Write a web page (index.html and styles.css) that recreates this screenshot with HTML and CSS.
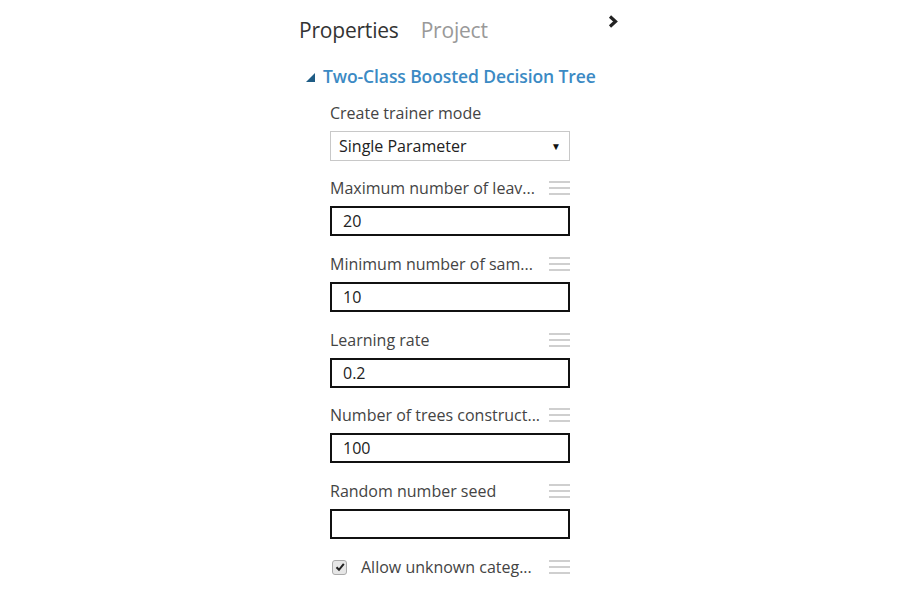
FILE: index.html
```html
<!DOCTYPE html>
<html>
<head>
<meta charset="utf-8">
<link rel="stylesheet" href="styles.css">
</head>
<body>
<div class="panel">
  <div class="tabs">
    <span class="tab active">Properties</span>
    <span class="tab">Project</span>
    <svg class="chev" width="10" height="13" viewBox="0 0 10 13"><path d="M2 1.5 L7.5 6.5 L2 11.5" fill="none" stroke="#222" stroke-width="3.2"/></svg>
  </div>
  <div class="section-title">
    <svg class="tri" width="9" height="9" viewBox="0 0 9 9"><polygon points="9,0 9,9 0,9" fill="#1f5c85"/></svg>
    <span>Two-Class Boosted Decision Tree</span>
  </div>
  <div class="fields">
    <div class="field select-field">
      <div class="label-row"><span class="label">Create trainer mode</span></div>
      <div class="select"><span>Single Parameter</span><span class="arrow">▼</span></div>
    </div>
    <div class="field">
      <div class="label-row"><span class="label">Maximum number of leav...</span><span class="menu"><i></i><i></i><i></i></span></div>
      <div class="input">20</div>
    </div>
    <div class="field">
      <div class="label-row"><span class="label">Minimum number of sam...</span><span class="menu"><i></i><i></i><i></i></span></div>
      <div class="input">10</div>
    </div>
    <div class="field tight">
      <div class="label-row"><span class="label">Learning rate</span><span class="menu"><i></i><i></i><i></i></span></div>
      <div class="input">0.2</div>
    </div>
    <div class="field">
      <div class="label-row"><span class="label">Number of trees construct...</span><span class="menu"><i></i><i></i><i></i></span></div>
      <div class="input">100</div>
    </div>
    <div class="field">
      <div class="label-row"><span class="label">Random number seed</span><span class="menu"><i></i><i></i><i></i></span></div>
      <div class="input"></div>
    </div>
    <div class="check-row">
      <span class="checkbox"><svg width="10" height="10" viewBox="0 0 10 10"><path d="M1.5 5.2 L4 7.8 L8.8 1.8" fill="none" stroke="#222" stroke-width="2"/></svg></span>
      <span class="label check-label">Allow unknown categ...</span>
      <span class="menu"><i></i><i></i><i></i></span>
    </div>
  </div>
</div>
</body>
</html>
```
FILE: styles.css
```css
* { box-sizing: border-box; }
body {
  margin: 0;
  background: #fff;
  font-family: "Open Sans", "Noto Sans", sans-serif;
  color: #444;
}
.panel {
  width: 322px;
  margin-left: 299px;
  padding-top: 15px;
}
.tabs {
  display: flex;
  align-items: center;
  height: 30px;
  gap: 22px;
}
.tab {
  font-size: 21px;
  line-height: 30px;
  color: #999;
  letter-spacing: -0.2px;
}
.tab.active { color: #333; }
.chev {
  margin-left: auto;
  margin-right: 3px;
  align-self: flex-start;
}
.section-title {
  display: flex;
  align-items: center;
  height: 24px;
  margin-top: 19px;
  padding-left: 7px;
  gap: 8px;
  font-size: 17.5px;
  font-weight: 600;
  color: #3b8ac4;
  letter-spacing: -0.1px;
}
.tri { margin-top: 3px; }
.fields {
  width: 240px;
  margin-left: 31px;
  margin-top: 13px;
}
.field { margin-bottom: 16px; }
.field.tight { margin-bottom: 15px; }
.select-field { margin-bottom: 15px; }
.label-row {
  display: flex;
  align-items: center;
  justify-content: space-between;
  height: 24px;
  margin-bottom: 6px;
}
.label {
  font-size: 16px;
  color: #444;
  white-space: nowrap;
}
.menu {
  display: flex;
  flex-direction: column;
  gap: 4px;
  width: 21px;
}
.menu i {
  display: block;
  height: 2px;
  background: #cfcfcf;
}
.select {
  display: flex;
  align-items: center;
  justify-content: space-between;
  height: 30px;
  border: 1px solid #c8c8c8;
  padding: 0 8px 0 8px;
  font-size: 16px;
  color: #222;
}
.arrow { font-size: 10px; color: #111; }
.input {
  height: 30px;
  border: 2px solid #111;
  padding-left: 11px;
  font-size: 16px;
  line-height: 26px;
  color: #222;
}
.check-row {
  display: flex;
  align-items: center;
  height: 24px;
}
.checkbox {
  display: flex;
  align-items: center;
  justify-content: center;
  width: 15px;
  height: 15px;
  margin-left: 2px;
  border: 1px solid #aaa;
  border-radius: 3px;
  background: #e6e6e6;
}
.check-label { margin-left: 14px; }
.check-row .menu { margin-left: auto; }
```
